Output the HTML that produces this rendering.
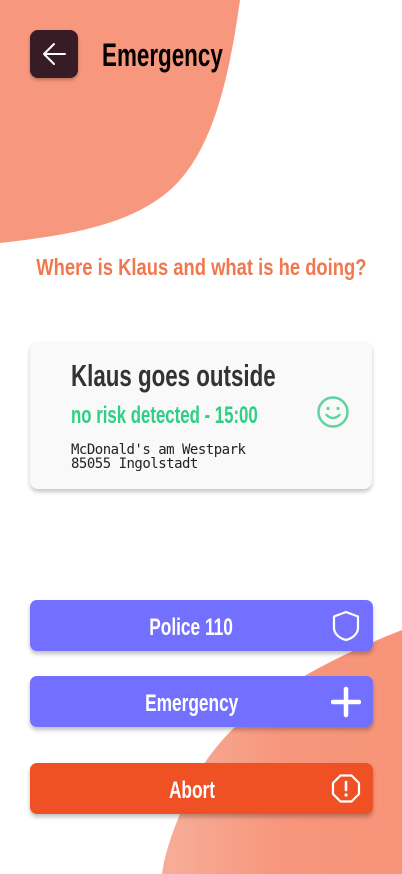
<!DOCTYPE html>
<html><head><meta charset="utf-8"><style>
*{margin:0;padding:0;box-sizing:border-box}
body{width:402px;height:874px;position:relative;overflow:hidden;background:#fff;font-family:"Liberation Sans",sans-serif}
.c{font-family:"Liberation Sans",sans-serif;font-weight:bold;white-space:nowrap}
.s{display:inline-block;transform-origin:left center}
.sc{display:inline-block;transform-origin:center center}
svg.bg{position:absolute;left:0;top:0}
.back{position:absolute;left:30px;top:30px;width:48px;height:48px;border-radius:8px;background:#371b25;box-shadow:0 2px 3px rgba(0,0,0,.25)}
h1{position:absolute;left:102px;top:36px;font-size:32px;line-height:38px;color:#000}
.q{position:absolute;left:-5px;width:402px;top:253px;text-align:center;font-size:23px;line-height:28px;color:#f0784f}
.card{position:absolute;left:30px;top:342px;width:342px;height:147px;background:#f9f9f9;border-radius:8px;box-shadow:0 3px 4px rgba(0,0,0,.22)}
.t1{position:absolute;left:41px;top:16px;font-size:31px;line-height:36px;color:#333}
.t2{position:absolute;left:41px;top:59px;font-size:24px;line-height:30px;color:#2fcf85}
.t3{position:absolute;left:41px;top:101px;font-size:14px;line-height:14px;color:#222;font-family:"DejaVu Sans Mono","Liberation Mono",monospace;font-weight:normal;letter-spacing:-0.5px}
.btn{position:absolute;left:30px;width:343px;height:51px;border-radius:7px;box-shadow:0 3px 4px rgba(0,0,0,.25);color:#fff;text-align:center;line-height:55px;font-size:24px;padding-right:20px}
.btn svg{position:absolute;right:12px;top:10px}
</style></head><body>
<svg class="bg" width="402" height="874" viewBox="0 0 402 874">
<defs><linearGradient id="g" x1="0" y1="0" x2="1" y2="0"><stop offset="0" stop-color="#f6ae99"/><stop offset="0.5" stop-color="#f7967c"/><stop offset="1" stop-color="#f79478"/></linearGradient></defs>
<path d="M0,0 L240,0 C230,70 215,150 170,190 C130,225 70,235 0,243 Z" fill="#f7977d"/>
<path d="M402,630 C300,670 220,720 190,790 C175,825 165,850 162,874 L402,874 Z" fill="url(#g)"/>
</svg>
<div class="back"><svg width="48" height="48" viewBox="0 0 48 48"><path d="M35 24H14M24 14L14 24L24 34" stroke="#fff" stroke-width="2" fill="none" stroke-linecap="round" stroke-linejoin="round"/></svg></div>
<h1 class="c"><span class="s" style="transform:scaleX(0.70)">Emergency</span></h1>
<div class="q c"><span class="sc" style="transform:scaleX(0.80)">Where is Klaus and what is he doing?</span></div>
<div class="card c">
<div class="t1"><span class="s" style="transform:scaleX(0.72)">Klaus goes outside</span></div>
<div class="t2"><span class="s" style="transform:scaleX(0.70)">no risk detected - 15:00</span></div>
<svg style="position:absolute;left:286px;top:53px" width="34" height="34" viewBox="0 0 34 34"><circle cx="17" cy="17" r="14.5" stroke="#5fd3a0" stroke-width="2.5" fill="none"/><circle cx="12" cy="13.5" r="1.6" fill="#5fd3a0"/><circle cx="22" cy="13.5" r="1.6" fill="#5fd3a0"/><path d="M10.5 20Q17 26 23.5 20" stroke="#5fd3a0" stroke-width="2.5" fill="none" stroke-linecap="round"/></svg>
<div class="t3">McDonald's am Westpark<br>85055 Ingolstadt</div>
</div>
<div class="btn c" style="top:600px;background:#7370ff"><span class="sc" style="transform:scaleX(0.72)">Police 110</span><svg width="30" height="32" viewBox="0 0 30 32"><path d="M15 2L27 6.5V18C27 24 21 28.5 15 30C9 28.5 3 24 3 18V6.5Z" stroke="#fff" stroke-width="2.2" fill="none" stroke-linejoin="round"/></svg></div>
<div class="btn c" style="top:676px;background:#7370ff"><span class="sc" style="transform:scaleX(0.72)">Emergency</span><svg width="30" height="32" viewBox="0 0 30 32"><path d="M15 3V29M2 16H28" stroke="#fff" stroke-width="4.5" stroke-linecap="round"/></svg></div>
<div class="btn c" style="top:763px;background:#f05124"><span class="sc" style="transform:scaleX(0.72)">Abort</span><svg width="30" height="32" viewBox="0 0 30 32"><path d="M9.5 2.5H20.5L28 10V21L20.5 28.5H9.5L2 21V10Z" stroke="#fff" stroke-width="2.2" fill="none" stroke-linejoin="round"/><path d="M15 9V17" stroke="#fff" stroke-width="2.6" stroke-linecap="round"/><circle cx="15" cy="22" r="1.6" fill="#fff"/></svg></div>
</body></html>
